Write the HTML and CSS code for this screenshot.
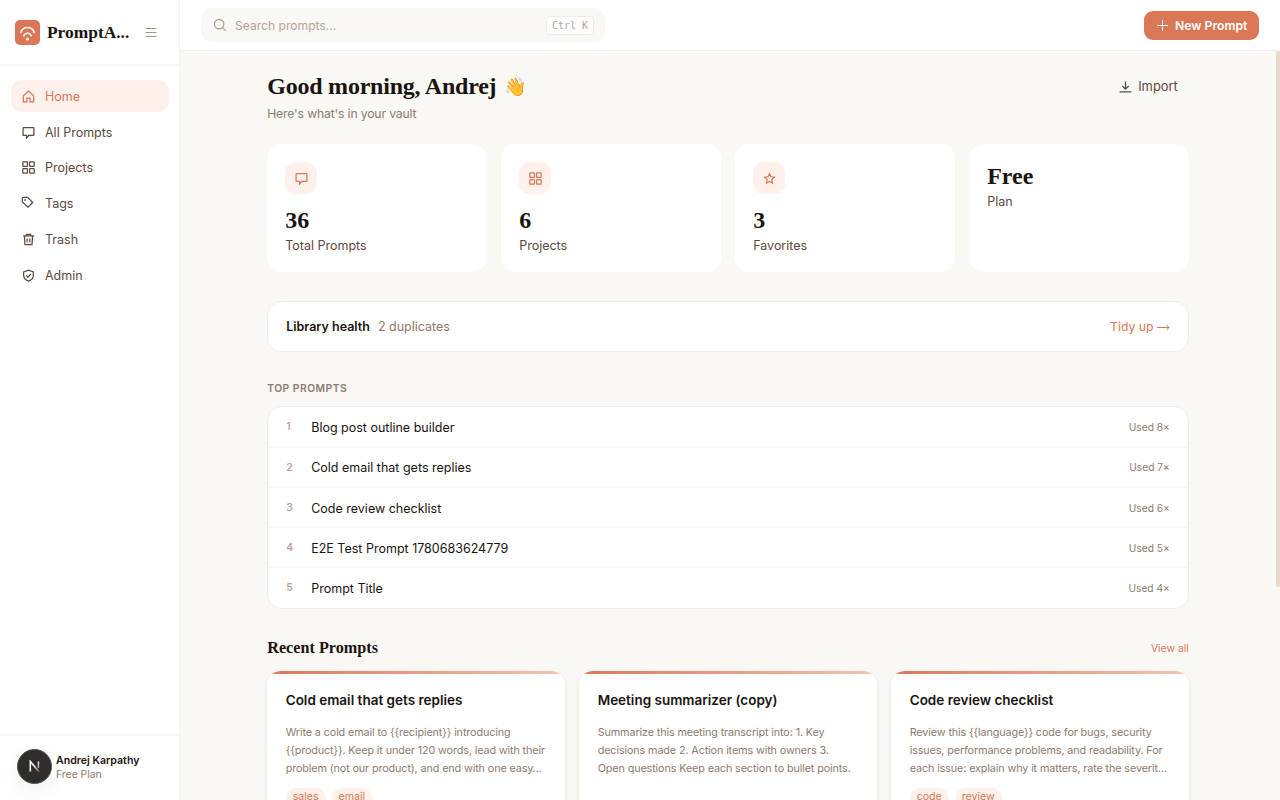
FILE: index.html
```html
<!DOCTYPE html>
<html lang="en">
<head>
  <meta charset="UTF-8" />
  <meta name="viewport" content="width=device-width, initial-scale=1.0"/>
  <title>Home</title>
  <link rel="stylesheet" href="styles.css">
</head>
<body>
  <svg class="sprite" width="0" height="0">
    <symbol id="i-chat" viewBox="0 0 24 24"><path d="M3 3h18a1 1 0 0 1 1 1v12.500a1 1 0 0 1-1 1h-8.500L8.500 22v-4.500H3a1 1 0 0 1-1-1V4a1 1 0 0 1 1-1z"/></symbol>
    <symbol id="i-grid" viewBox="0 0 24 24"><rect x="1.500" y="1.500" width="8.500" height="8.500" rx="1"/><rect x="14" y="1.500" width="8.500" height="8.500" rx="1"/><rect x="1.500" y="14" width="8.500" height="8.500" rx="1"/><rect x="14" y="14" width="8.500" height="8.500" rx="1"/></symbol>
  </svg>
  <div class="app">
    <aside class="sidebar">
      <div class="brand">
        <svg class="logo" viewBox="0 0 25 25"><rect width="25" height="25" rx="5"/><path d="M5.800 12.500a7 7 0 0 1 13.400 0M8.800 15.700a4 4 0 0 1 7.400 0"/><circle cx="12.500" cy="18.900" r="1.500"/></svg>
        <span class="brand-name">PromptA...</span>
        <svg class="menu-icon" viewBox="0 0 12 12"><path d="M0.500 1.500h11M0.500 5.500h11M0.500 9.500h11"/></svg>
      </div>
      <nav class="nav">
        <a class="nav-item active"><svg class="icon" viewBox="0 0 24 24"><path d="M2.500 10.500 12 2l9.500 8.500V22H15v-7H9v7H2.500z"/></svg>Home</a>
        <a class="nav-item"><svg class="icon"><use href="#i-chat"/></svg>All Prompts</a>
        <a class="nav-item"><svg class="icon"><use href="#i-grid"/></svg>Projects</a>
        <a class="nav-item"><svg class="icon icon-tag" viewBox="0 0 24 24"><path d="M4 2.500h8.500l9 9.500-8.500 8.500L2.500 11V4A1.500 1.500 0 0 1 4 2.500z"/><circle cx="7.500" cy="7.500" r=".6"/></svg>Tags</a>
        <a class="nav-item"><svg class="icon" viewBox="0 0 24 24"><path d="M2 5.500h20M8 5V2.500h8V5M4.500 6l1 15.500h13l1-15.500M9.500 10v7.500M14.500 10v7.500"/></svg>Trash</a>
        <a class="nav-item"><svg class="icon" viewBox="0 0 24 24"><path d="M12 2l9 3.200v6.300c0 5.500-4 9-9 10.800-5-1.800-9-5.300-9-10.800V5.200zM8 12l3 3 5.500-6"/></svg>Admin</a>
      </nav>
      <div class="user">
        <div class="avatar"><svg viewBox="0 0 14 14"><defs><linearGradient id="fade" x1="0" y1="0" x2="1" y2="1"><stop offset=".4" stop-color="#fff"/><stop offset="1" stop-color="#fff" stop-opacity=".2"/></linearGradient></defs><path d="M2.500 12.500v-11L12 13M11.300 1.500v7.500" stroke="url(#fade)"/></svg></div>
        <div>
          <div class="user-name">Andrej Karpathy</div>
          <div class="user-plan">Free Plan</div>
        </div>
      </div>
    </aside>

    <div class="main">
      <header class="topbar">
        <div class="search">
          <svg class="search-icon" viewBox="0 0 24 24"><circle cx="10.500" cy="10.500" r="8"/><path d="M16.500 16.500 22 22"/></svg>
          <span class="placeholder">Search prompts...</span>
          <kbd>Ctrl K</kbd>
        </div>
        <button class="new-button"><svg viewBox="0 0 12 12"><path d="M6 1v10M1 6h10"/></svg><span>New Prompt</span></button>
      </header>

      <div class="scroll">
        <div class="content">
          <div class="greeting">
            <div>
              <h1><span class="hello">Good morning, Andrej</span> <span class="wave">👋</span></h1>
              <p class="subtitle">Here's what's in your vault</p>
            </div>
            <a class="import"><svg viewBox="0 0 12 12"><path d="M6 .5v7.500M2.800 5 6 8.200 9.200 5M0 10.900h12"/></svg>Import</a>
          </div>

          <div class="stats">
            <div class="stat">
              <div class="stat-icon"><svg class="icon"><use href="#i-chat"/></svg></div>
              <div class="stat-value">36</div>
              <div class="stat-label">Total Prompts</div>
            </div>
            <div class="stat">
              <div class="stat-icon"><svg class="icon"><use href="#i-grid"/></svg></div>
              <div class="stat-value">6</div>
              <div class="stat-label">Projects</div>
            </div>
            <div class="stat">
              <div class="stat-icon"><svg class="icon" viewBox="0 0 24 24"><path d="M12 3l2.700 5.800 6.300.7-4.700 4.400 1.300 6.600L12 17.300 6.400 20.500l1.300-6.600L3 9.500l6.300-.7z"/></svg></div>
              <div class="stat-value">3</div>
              <div class="stat-label">Favorites</div>
            </div>
            <div class="stat">
              <div class="stat-value">Free</div>
              <div class="stat-label">Plan</div>
            </div>
          </div>

          <div class="health">
            <span class="health-title">Library health</span>
            <span class="health-info">2 duplicates</span>
            <a class="tidy">Tidy up <svg viewBox="0 0 13 7"><path d="M0 3.500h12M9.500 1 12 3.500 9.500 6"/></svg></a>
          </div>

          <h2 class="section-label">TOP PROMPTS</h2>
          <div class="top-list">
            <div class="row"><span class="rank">1</span><span class="row-title">Blog post outline builder</span><span class="used">Used 8×</span></div>
            <div class="row"><span class="rank">2</span><span class="row-title">Cold email that gets replies</span><span class="used">Used 7×</span></div>
            <div class="row"><span class="rank">3</span><span class="row-title">Code review checklist</span><span class="used">Used 6×</span></div>
            <div class="row"><span class="rank">4</span><span class="row-title">E2E Test Prompt 1780683624779</span><span class="used">Used 5×</span></div>
            <div class="row"><span class="rank">5</span><span class="row-title">Prompt Title</span><span class="used">Used 4×</span></div>
          </div>

          <div class="recent-head">
            <h2>Recent Prompts</h2>
            <a>View all</a>
          </div>
          <div class="cards">
            <div class="card">
              <h3>Cold email that gets replies</h3>
              <p>Write a cold email to {{recipient}} introducing<br>{{product}}. Keep it under 120 words, lead with their<br>problem (not our product), and end with one easy…</p>
              <div class="tags"><span>sales</span><span>email</span></div>
            </div>
            <div class="card">
              <h3>Meeting summarizer (copy)</h3>
              <p>Summarize this meeting transcript into: 1. Key<br>decisions made 2. Action items with owners 3.<br>Open questions Keep each section to bullet points.</p>
            </div>
            <div class="card">
              <h3>Code review checklist</h3>
              <p>Review this {{language}} code for bugs, security<br>issues, performance problems, and readability. For<br>each issue: explain why it matters, rate the severit…</p>
              <div class="tags"><span>code</span><span>review</span></div>
            </div>
          </div>
        </div>
        <div class="scrollbar"></div>
      </div>
    </div>
  </div>
</body>
</html>
```
FILE: styles.css
```css
* {
  box-sizing: border-box;
}

body {
  margin: 0;
  font-family: 'Inter', sans-serif;
  font-size: 12.5px;
  color: #1a1410;
  background: #faf8f5;
  overflow: hidden;
}

h1, h2, h3, p {
  margin: 0;
}

svg {
  fill: none;
  stroke: currentColor;
  flex-shrink: 0;
}

.sprite {
  position: absolute;
}

.icon {
  width: 13px;
  height: 13px;
  stroke-width: 2.3;
}

.app {
  display: flex;
  height: 100vh;
}

/* Sidebar */
.sidebar {
  width: 180px;
  display: flex;
  flex-direction: column;
  background: #fff;
  border-right: 1px solid #f3f2f2;
}

.brand {
  height: 66px;
  display: flex;
  align-items: center;
  padding-left: 15px;
  border-bottom: 2px solid #f7f6f6;
}

.logo {
  width: 25px;
  height: 25px;
  stroke: #fff;
  stroke-width: 1.6;
  stroke-linecap: round;
}

.logo rect {
  fill: #da7756;
  stroke: none;
}

.logo circle {
  fill: #fff;
  stroke: none;
}

.brand-name {
  width: 104.5px;
  padding-left: 7px;
  font-family: 'Liberation Serif', serif;
  font-size: 17.4px;
  font-weight: 700;
}

.menu-icon {
  width: 12px;
  height: 12px;
  margin-top: 2px;
  stroke-width: 1.2;
  color: #a39382;
}

.nav {
  flex: 1;
  padding: 14.4px 10px 0 11px;
  display: flex;
  flex-direction: column;
  gap: 3.8px;
}

.nav-item {
  height: 32px;
  display: flex;
  align-items: center;
  gap: 10px;
  padding-left: 11px;
  border-radius: 11px;
  color: #5c4a3f;
}

.nav-item.active {
  background: #fef0eb;
  color: #da7756;
}

.icon-tag {
  position: relative;
  top: -1px;
  left: -1px;
}

.user {
  height: 66px;
  display: flex;
  align-items: center;
  gap: 4px;
  padding: 0 0 4px 17px;
  border-top: 2px solid #f7f6f6;
}

.avatar {
  width: 35px;
  height: 35px;
  border-radius: 50%;
  background: #2f2d29;
  border: 1px solid #55534f;
  box-shadow: 0 8px 20px rgba(0, 0, 0, 0.06);
  display: flex;
  align-items: center;
  justify-content: center;
}

.avatar svg {
  width: 13px;
  height: 13px;
  stroke-width: 1.7;
}

.user-name {
  margin-top: 3px;
  font-size: 10.6px;
  font-weight: 600;
  line-height: 14px;
}

.user-plan {
  font-size: 10.4px;
  line-height: 14px;
  color: #8c7b6e;
}

/* Top bar */
.main {
  flex: 1;
  display: flex;
  flex-direction: column;
}

.topbar {
  height: 51px;
  display: flex;
  align-items: center;
  justify-content: space-between;
  padding: 0 21px;
  background: #fff;
  border-bottom: 1px solid #f0eff0;
}

.search {
  width: 404px;
  height: 34px;
  display: flex;
  align-items: center;
  padding: 0 11px 0 12px;
  border-radius: 11px;
  background: #faf8f5;
  color: #b8a395;
}

.search-icon {
  width: 14px;
  height: 14px;
  stroke-width: 2.3;
}

.placeholder {
  flex: 1;
  padding-left: 8px;
  font-size: 12.1px;
}

kbd {
  height: 19px;
  padding: 0 5px;
  border: 1px solid #eeecea;
  border-radius: 4px;
  background: #fff;
  font-family: 'DejaVu Sans Mono', monospace;
  font-size: 10px;
  line-height: 17px;
}

.new-button {
  width: 115px;
  height: 29px;
  display: flex;
  align-items: center;
  gap: 6px;
  padding: 0 0 0 12px;
  border: none;
  border-radius: 9px;
  background: #da7756;
  color: #fff;
  font-family: inherit;
  font-size: 12.2px;
  font-weight: 600;
}

.new-button svg {
  width: 13px;
  height: 13px;
}

/* Page content */
.scroll {
  flex: 1;
  display: flex;
  min-height: 0;
  overflow: hidden;
}

.content {
  width: 921.6px;
  margin: 0 auto;
  padding-top: 21.6px;
}

.scrollbar {
  width: 4px;
  height: 536px;
  border-radius: 2px;
  background: #e8d9c9;
}

.greeting {
  height: 71.4px;
  display: flex;
  justify-content: space-between;
}

h1 {
  height: 28px;
  display: flex;
  align-items: center;
  font-family: 'Liberation Serif', serif;
  font-size: 24px;
}

.hello {
  letter-spacing: -0.22px;
}

.wave {
  margin-left: 8px;
  font-family: 'Noto Color Emoji', serif;
  font-size: 18.2px;
  filter: hue-rotate(-8deg);
}

.subtitle {
  margin-top: 3px;
  font-size: 12.2px;
  line-height: 20px;
  letter-spacing: -0.15px;
  color: #8c7b6e;
}

.import {
  height: 28px;
  display: flex;
  align-items: center;
  gap: 6px;
  padding-right: 11px;
  font-size: 12.9px;
  color: #5c4a3f;
}

.import svg {
  width: 13px;
  height: 12px;
  stroke-width: 1.3;
}

.stats {
  display: grid;
  grid-template-columns: repeat(4, 1fr);
  gap: 14.4px;
}

.stat {
  height: 128.5px;
  padding: 18px;
  border-radius: 14.4px;
  background: #fff;
}

.stat-icon {
  width: 32px;
  height: 32.4px;
  margin-bottom: 12px;
  display: flex;
  align-items: center;
  justify-content: center;
  border-radius: 11px;
  background: #fef0eb;
  color: #da7756;
}

.stat-value {
  font-family: 'Liberation Serif', serif;
  font-size: 24px;
  font-weight: 700;
  line-height: 29px;
}

.stat-label {
  line-height: 21px;
  color: #5c4a3f;
}

.health {
  height: 51px;
  margin-top: 28.8px;
  display: flex;
  align-items: center;
  padding: 0 18px;
  border: 1px solid #eeedee;
  border-radius: 14.4px;
  background: #fff;
}

.health-title {
  font-weight: 600;
}

.health-info {
  flex: 1;
  padding-left: 8px;
  color: #8c7b6e;
}

.tidy {
  font-size: 12.2px;
  color: #da7756;
}

.tidy svg {
  width: 13px;
  height: 7px;
}

.section-label {
  margin-top: 27.5px;
  margin-bottom: 9px;
  font-size: 10.3px;
  font-weight: 600;
  line-height: 17px;
  letter-spacing: 0.5px;
  color: #8c7b6e;
}

.top-list {
  border: 1px solid #eeedee;
  border-radius: 14.4px;
  background: #fff;
}

.row {
  height: 40.2px;
  display: flex;
  align-items: center;
  padding: 0 18px;
  border-bottom: 1px solid #f8f7f7;
}

.row:first-child {
  height: 41px;
}

.row:last-child {
  height: 39.2px;
  border-bottom: none;
}

.rank {
  width: 25px;
  font-size: 10.4px;
  font-weight: 600;
  color: #b8a395;
}

.row-title {
  flex: 1;
  padding-top: 1px;
}

.used {
  font-size: 10.2px;
  color: #8c7b6e;
}

.recent-head {
  height: 20px;
  margin-top: 30px;
  margin-bottom: 12.3px;
  display: flex;
  align-items: center;
  justify-content: space-between;
}

.recent-head h2 {
  font-family: 'Liberation Serif', serif;
  font-size: 16.2px;
}

.recent-head a {
  font-size: 10.4px;
  color: #da7756;
}

.cards {
  display: grid;
  grid-template-columns: repeat(3, 1fr);
  gap: 14.4px;
}

.card {
  position: relative;
  height: 170px;
  padding: 19px 18.5px;
  border-radius: 14.4px;
  background: #fff;
  box-shadow: 0 1px 4px rgba(26, 20, 16, 0.08);
  overflow: hidden;
}

.card::before {
  content: "";
  position: absolute;
  top: 0;
  left: 0;
  right: 0;
  height: 3px;
  background: linear-gradient(90deg, #da7756, #f2c4b3);
}

.card h3 {
  font-size: 13.5px;
  font-weight: 600;
  line-height: 20px;
}

.card p {
  margin-top: 14.3px;
  font-size: 10.8px;
  letter-spacing: -0.12px;
  line-height: 18px;
  white-space: nowrap;
  color: #8c7b6e;
}

.tags {
  display: flex;
  gap: 6px;
  margin-top: 10px;
}

.tags span {
  height: 19px;
  padding: 0 7px;
  border-radius: 10px;
  background: #fef0eb;
  color: #da7756;
  font-size: 10.6px;
  line-height: 17px;
}
```
